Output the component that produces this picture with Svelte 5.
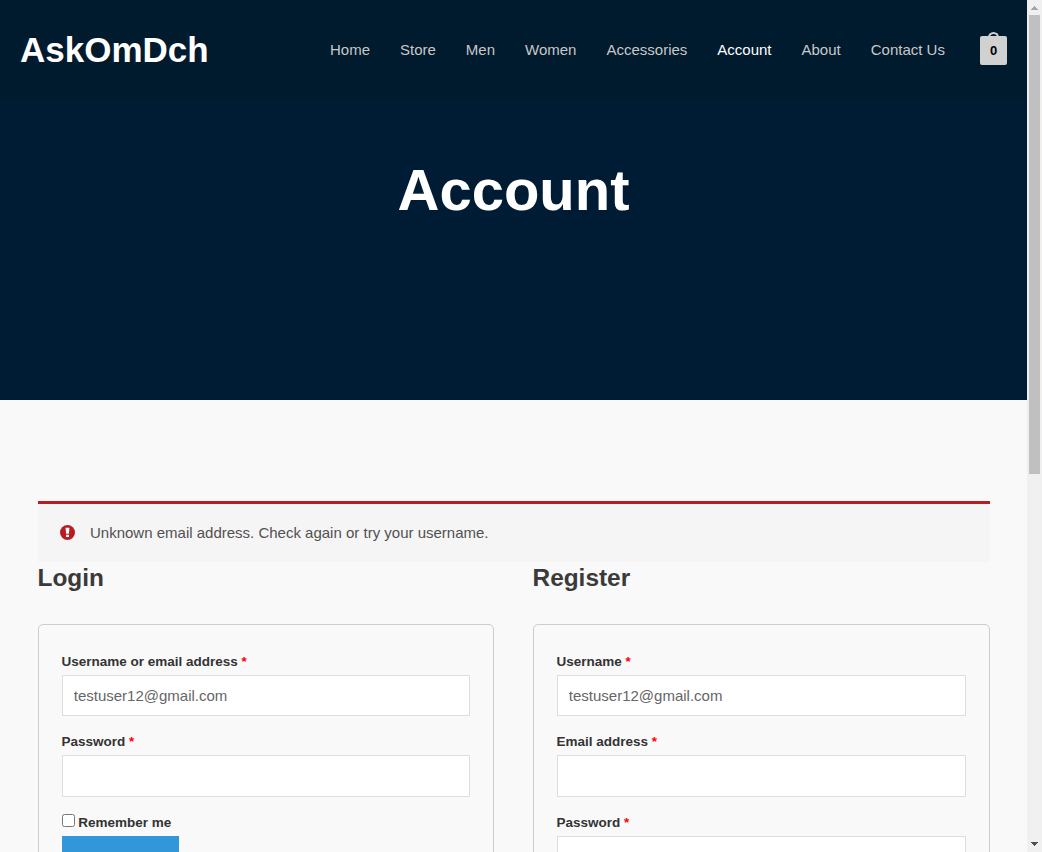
<script>
  const links = ['Home', 'Store', 'Men', 'Women', 'Accessories', 'Account', 'About', 'Contact Us'];
  let loginName = $state('testuser12@gmail.com');
  let registerName = $state('testuser12@gmail.com');
</script>

<div class="window">
  <div class="page">
    <header>
      <a class="brand" href="#home">AskOmDch</a>
      <nav>
        {#each links as link}
          <a href="#{link}" class:active={link === 'Account'}>{link}</a>
        {/each}
      </nav>
      <div class="cart"><span class="handle"></span>0</div>
    </header>
    <section class="hero"><h1>Account</h1></section>
    <main>
      <div class="notice">
        <svg width="15" height="15" viewBox="0 0 15 15">
          <circle cx="7.5" cy="7.5" r="7.5" fill="#b81c23" />
          <path d="M5.5 2.8h4l-.6 6H6.1zM6 9.7h3V12H6z" fill="#f6f6f6" />
        </svg>
        <span>Unknown email address. Check again or try your username.</span>
      </div>
      <div class="columns">
        <section>
          <h2>Login</h2>
          <form>
            <label for="lu">Username or email address <b>*</b></label>
            <input class="field" id="lu" type="text" bind:value={loginName} />
            <label for="lp">Password <b>*</b></label>
            <input class="field" id="lp" type="password" />
            <label class="remember"><input type="checkbox" /><span>Remember me</span></label>
            <button type="button" aria-label="Log in"></button>
          </form>
        </section>
        <section>
          <h2>Register</h2>
          <form>
            <label for="ru">Username <b>*</b></label>
            <input class="field" id="ru" type="text" bind:value={registerName} />
            <label for="re">Email address <b>*</b></label>
            <input class="field" id="re" type="email" />
            <label for="rp">Password <b>*</b></label>
            <input class="field" id="rp" type="password" />
          </form>
        </section>
      </div>
    </main>
  </div>
  <div class="scrollbar">
    <svg width="15" height="15" viewBox="0 0 15 15" shape-rendering="crispEdges"><path d="M7 6h1v1h1v1h1v1h1v1H4V9h1V8h1V7h1z" fill="#a3a3a3" /></svg>
    <div class="thumb"></div>
    <svg class="down" width="15" height="15" viewBox="0 0 15 15" shape-rendering="crispEdges"><path d="M4 5h7v1h-1v1H9v1H8v1H7V8H6V7H5V6H4z" fill="#505050" /></svg>
  </div>
</div>

<style>
  :global(body) { margin: 0; overflow: hidden; }
  .window { display: flex; width: 1042px; height: 852px; overflow: hidden; font: 15px "Liberation Sans", Arial, sans-serif; }
  .page { width: 1027px; height: 852px; overflow: hidden; background: #f9f9f9; }
  header { height: 99px; display: flex; align-items: center; box-sizing: border-box; padding: 0 20px; background: #001a2e; }
  .brand { color: #fff; font-size: 35px; font-weight: 700; line-height: 40px; text-decoration: none; }
  nav { display: flex; gap: 30px; margin-left: auto; margin-right: 35.08px; }
  nav a { color: #c8c8c8; line-height: 20px; text-decoration: none; white-space: nowrap; }
  nav a.active { color: #fff; }
  .cart { position: relative; width: 27px; height: 29px; margin-top: 2px; border-radius: 2px; background: #d1d1d1; color: #000; font-size: 13px; font-weight: 700; line-height: 30px; text-align: center; }
  .handle { position: absolute; box-sizing: border-box; left: 8px; top: -4px; width: 11px; height: 8px; border: 2px solid #d1d1d1; border-bottom: 0; border-radius: 6px 6px 0 0; }
  .hero { box-sizing: border-box; height: 301px; padding-top: 56px; background: #001c34; text-align: center; }
  h1 { margin: 0; color: #fff; font-size: 58px; line-height: 70px; }
  main { padding: 101px 37.5px 0; }
  .notice { display: flex; align-items: center; box-sizing: border-box; height: 61px; padding: 0 0 2px 22.5px; gap: 15px; border-top: 3px solid #b81c23; background: #f5f5f5; color: #515151; }
  .notice svg { display: block; }
  .columns { display: flex; justify-content: space-between; }
  .columns section { width: 48%; }
  h2 { margin: 0; height: 61.9px; color: #3a3a3a; font-size: 24.4px; line-height: 32px; }
  form { box-sizing: border-box; height: 400px; padding: 24px 23px; border: 1px solid #cfcccd; border-radius: 5px; }
  label { display: block; height: 25px; margin-bottom: 1px; color: #333; font-size: 13.5px; font-weight: 700; line-height: 25px; }
  label b { color: #f00; }
  .field { display: block; box-sizing: border-box; width: 100%; height: 41.25px; margin: 0 0 13.25px; padding: 0 11.25px; border: 1px solid #ddd; border-radius: 0; outline: 0; background: #fff; color: #666; font: inherit; }
  .remember { display: flex; align-items: center; }
  .remember input { width: 13px; height: 13px; margin: 0 3.75px 3px 0; }
  button { display: block; width: 117px; height: 42px; padding: 0; border: 0; background: #3197d9; }
  .scrollbar { width: 15px; display: flex; flex-direction: column; background: #f0f0f0; }
  .scrollbar svg { display: block; flex: none; }
  .thumb { width: 11px; height: 459px; margin-left: 2px; background: #c0c0c0; }
  .down { margin-top: auto; }
</style>
